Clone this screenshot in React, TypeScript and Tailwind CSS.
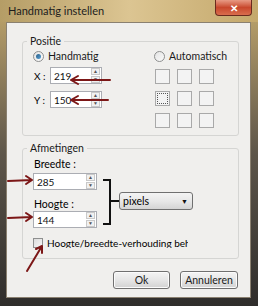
import type { ReactNode } from 'react'

const font = { fontFamily: 'Lato, "Open Sans", sans-serif' }

function Radio({ checked, label }: { checked?: boolean; label: string }) {
  return (
    <div className="flex h-[13px] items-center gap-[4px]">
      <span className="flex h-[11px] w-[11px] items-center justify-center rounded-full border border-[#8e8f8f] bg-gradient-to-br from-[#e4e4e4] to-[#fafafa]">
        {checked && <span className="h-[5px] w-[5px] rounded-full bg-gradient-to-br from-[#2b5f87] to-[#56a1d8]" />}
      </span>
      <span className="text-[10.5px] leading-none text-[#1a1a1a]">{label}</span>
    </div>
  )
}

function Spin({ value, width }: { value: string; width: string }) {
  return (
    <div className={`flex h-[17px] ${width} items-center border border-[#abadb3] bg-white`}>
      <span className="flex-1 pl-[3px] text-[10px] leading-none text-[#111]">{value}</span>
      <div className="mr-[1px] flex h-[15px] w-[9px] flex-col gap-[1px]">
        <span className="flex flex-1 items-center justify-center border border-[#c9c9c9] bg-[#f1f1f1] text-[5px] leading-none text-[#555]">▲</span>
        <span className="flex flex-1 items-center justify-center border border-[#c9c9c9] bg-[#f1f1f1] text-[5px] leading-none text-[#555]">▼</span>
      </div>
    </div>
  )
}

function Group({ title, className, children }: { title: string; className: string; children: ReactNode }) {
  return (
    <div className={`relative rounded-[3px] border border-[#d5d5d3] ${className}`}>
      <span className="absolute left-[4px] top-[-7px] bg-[#f0efed] px-[3px] text-[10.5px] leading-[13px] text-[#1a1a1a]">{title}</span>
      {children}
    </div>
  )
}

function Button({ label, width }: { label: string; width: string }) {
  return (
    <div className={`flex h-[18px] ${width} items-center justify-center rounded-[3px] border border-[#707070] bg-gradient-to-b from-[#f4f4f4] via-[#e6e6e6] to-[#d2d2d2] text-[10.5px] leading-none text-[#1a1a1a] shadow-[inset_0_0_0_1px_#fbfbfb]`}>
      {label}
    </div>
  )
}

const red = '#7c1717'

export default function App() {
  return (
    <div
      className="relative h-[306px] w-[258px] overflow-hidden bg-gradient-to-b from-[#c3a86c] via-[#5e564a] to-[#2f2d2b]"
      style={font}
    >
      <div className="flex h-[22px] items-start justify-between bg-gradient-to-r from-[#b59d66] via-[#dcc592] to-[#c4a86b] pl-[8px] pr-[6px]">
        <span className="mt-[4px] text-[11px] leading-[13px] text-[#1c1c1c]">Handmatig instellen</span>
        <div className="flex h-[16px] w-[37px] items-center justify-center rounded-b-[4px] border border-t-0 border-[#6a2a1e] bg-gradient-to-b from-[#e79a84] via-[#c8472c] to-[#d96d4d] text-[10px] font-bold leading-none text-white">
          ✕
        </div>
      </div>

      <div className="mx-[6px] h-[276px] w-[245px] border border-[#8a8070] bg-[#f0efed] pl-[15px] pr-[11px] pt-[18px]">
        <Group title="Positie" className="h-[95px]">
          <div className="flex pl-[10px] pt-[8px]">
            <div className="flex w-[121px] flex-col">
              <Radio checked label="Handmatig" />
              <div className="mt-[4px] flex items-center">
                <span className="w-[17px] pl-[1px] text-[10px] leading-none">X :</span>
                <Spin value="219" width="w-[52px]" />
              </div>
              <div className="mt-[7px] flex items-center">
                <span className="w-[17px] pl-[1px] text-[10px] leading-none">Y :</span>
                <Spin value="150" width="w-[52px]" />
              </div>
            </div>
            <div className="flex flex-col">
              <Radio label="Automatisch" />
              <div className="ml-[1px] mt-[6px] grid w-[59px] grid-cols-3 gap-[7px]">
                {Array.from({ length: 9 }).map((_, i) => (
                  <div key={i} className="flex h-[15px] w-[15px] items-center justify-center border border-[#a9a9a9] bg-[#f3f3f3]">
                    {i === 3 && <div className="h-[11px] w-[11px] border border-dotted border-[#555]" />}
                  </div>
                ))}
              </div>
            </div>
          </div>
        </Group>

        <Group title="Afmetingen" className="mt-[12px] h-[111px]">
          <div className="flex flex-col pl-[10px] pt-[9px]">
            <div className="flex items-start">
              <div className="flex w-[64px] flex-col">
                <span className="h-[13px] pl-[1px] text-[10.5px] leading-[13px]">Breedte :</span>
                <div className="mt-[2px]">
                  <Spin value="285" width="w-[64px]" />
                </div>
                <span className="mt-[8px] h-[13px] pl-[1px] text-[10.5px] leading-[13px]">Hoogte :</span>
                <Spin value="144" width="w-[64px]" />
              </div>
              <svg className="ml-[6px] mt-[21px]" width="16" height="46" viewBox="0 0 16 46">
                <path d="M0 1 H7 V45 H0 M7 22 H16" fill="none" stroke="#111" strokeWidth="2" />
              </svg>
              <div className="mt-[34px] flex h-[18px] w-[74px] items-center justify-between rounded-[3px] border border-[#707070] bg-gradient-to-b from-[#f4f4f4] via-[#e8e8e8] to-[#d4d4d4] pl-[3px] pr-[4px]">
                <span className="text-[10.5px] leading-none">pixels</span>
                <span className="text-[7px] leading-none text-[#111]">▼</span>
              </div>
            </div>
            <div className="mt-[10px] flex w-[155px] items-center gap-[4px] overflow-hidden whitespace-nowrap">
              <span className="h-[10px] w-[10px] shrink-0 border border-[#8e8f8f] bg-gradient-to-br from-[#dcdcdc] to-[#f6f6f6]" />
              <span className="text-[10px] leading-none">Hoogte/breedte-verhouding behouden</span>
            </div>
          </div>
        </Group>

        <div className="mt-[12px] flex justify-end gap-[10px] pr-[1px]">
          <Button label="Ok" width="w-[57px]" />
          <Button label="Annuleren" width="w-[58px]" />
        </div>
      </div>

      <svg className="pointer-events-none absolute left-0 top-0" width="258" height="306" viewBox="0 0 258 306">
        <g fill="none" stroke={red} strokeWidth="2" strokeLinecap="round" strokeLinejoin="round">
          <path d="M110 80 H71 M78 76 L71 80 L78 84" />
          <path d="M108 100 H71 M78 96 L71 100 L78 104" />
          <path d="M8 181 L32 180 M26 176 L32 180 L26 184" />
          <path d="M8 218 L32 217 M26 213 L32 217 L26 221" />
          <path d="M27 271 L42 246 M36 249 L42 246 L42 253" />
        </g>
      </svg>
    </div>
  )
}
